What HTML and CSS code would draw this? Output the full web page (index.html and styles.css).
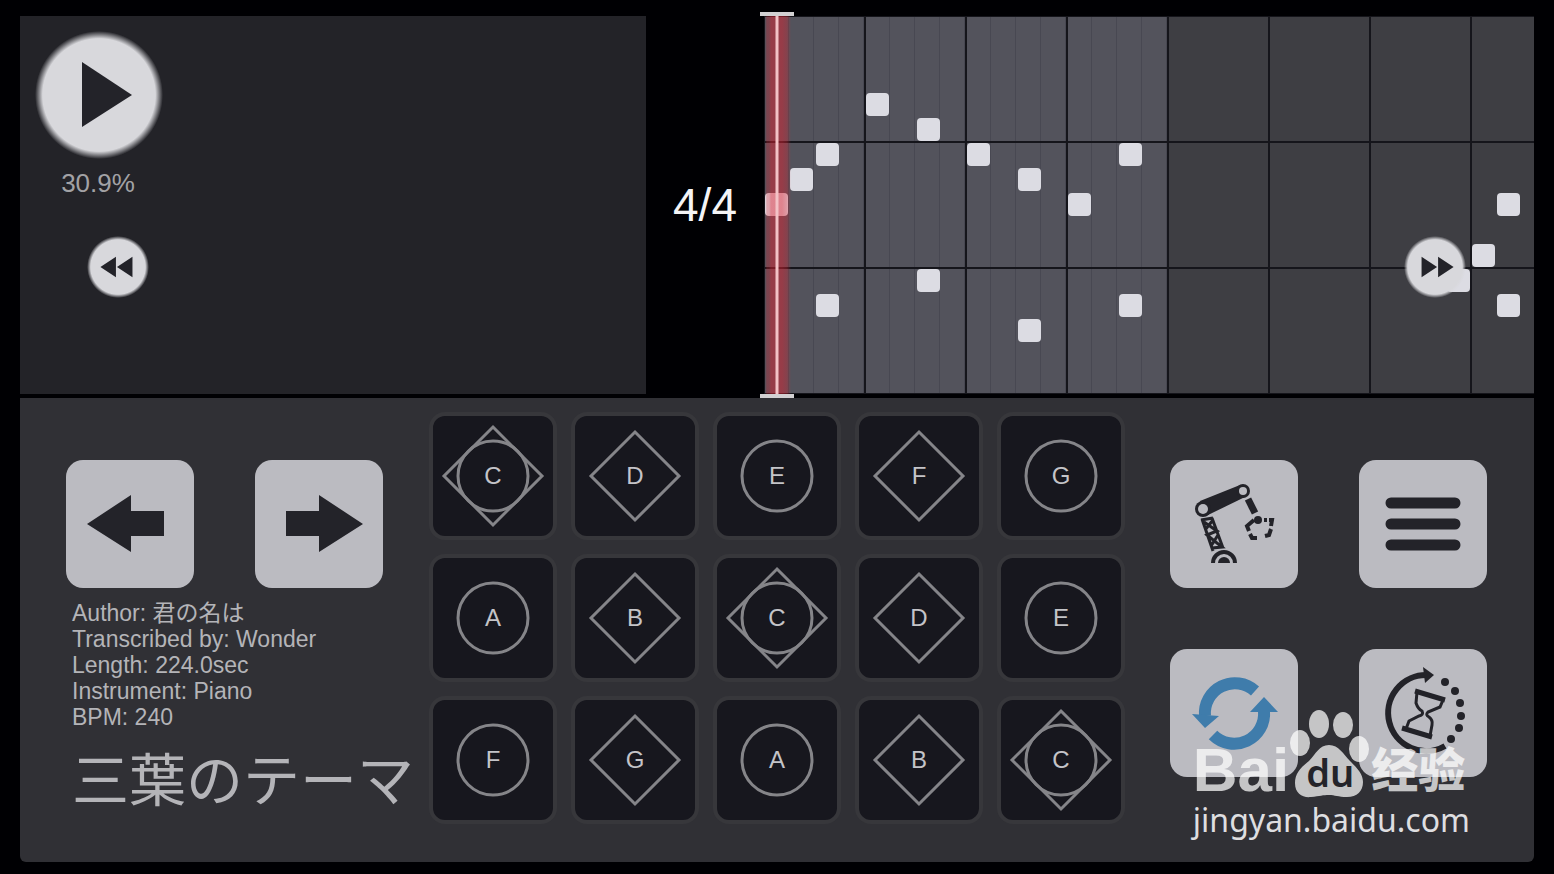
FILE: index.html
```html
<!DOCTYPE html>
<html lang="en">
<head>
<meta charset="UTF-8" />
<meta name="viewport" content="width=device-width, initial-scale=1" />
<title>三葉のテーマ - Player</title>
<link rel="stylesheet" href="styles.css">
</head>
<body>

<svg class="defs" aria-hidden="true">
  <symbol id="shape-circle" viewBox="0 0 120 120">
    <circle cx="60" cy="60" r="35" />
  </symbol>
  <symbol id="shape-diamond" viewBox="0 0 120 120">
    <path d="M60 16 104 60 60 104 16 60Z" />
  </symbol>
  <symbol id="shape-both" viewBox="0 0 120 120">
    <path d="M60 11 109 60 60 109 11 60Z" />
    <circle cx="60" cy="60" r="35" />
  </symbol>
</svg>

<main>
  <section class="stage">
    <div class="transport">
      <button class="round-btn play-btn" aria-label="Play">
        <svg viewBox="0 0 128 128"><path d="M47 31 97 64 47 96Z" /></svg>
      </button>
      <div class="progress">30.9%</div>
      <button class="round-btn skip-btn" aria-label="Rewind">
        <svg viewBox="0 0 60 60"><path d="M13 30 28 20V40ZM29 30 44 20V40Z" /></svg>
      </button>
    </div>

    <div class="signature">4/4</div>

    <div class="roll">
      <div class="lanes"><div class="notes" id="notes"></div></div>
      <button class="round-btn skip-btn forward-btn" aria-label="Fast forward">
        <svg viewBox="0 0 60 60"><path d="M17 20 32 30 17 40ZM33 20 48 30 33 40Z" /></svg>
      </button>
      <div class="playhead"></div>
    </div>
  </section>

  <section class="deck">
    <div class="song">
      <div class="tiles">
        <button class="tile" aria-label="Previous">
          <svg viewBox="0 0 128 128"><path d="M21 64 65 35V51H98V76H65V92Z" /></svg>
        </button>
        <button class="tile" aria-label="Next">
          <svg viewBox="0 0 128 128"><path d="M108 64 64 35V51H31V76H64V92Z" /></svg>
        </button>
      </div>
      <ul class="info">
        <li>Author: 君の名は</li>
        <li>Transcribed by: Wonder</li>
        <li>Length: 224.0sec</li>
        <li>Instrument: Piano</li>
        <li>BPM: 240</li>
      </ul>
      <h1>三葉のテーマ</h1>
    </div>

    <div class="keys" id="keys"></div>

    <div class="tiles tools">
      <button class="tile" aria-label="Auto play">
        <svg viewBox="0 0 128 128">
          <path d="M30 41 70 25 75 37 36 56Z" />
          <circle cx="33" cy="49" r="8" /><circle cx="73" cy="31" r="7" />
          <circle class="hole" cx="33" cy="49" r="5" /><circle class="hole" cx="73" cy="31" r="4" />
          <path class="line" stroke-width="7" d="M78 39 85 53" />
          <circle cx="88" cy="60" r="4" />
          <path class="line" stroke-width="4" d="M84 60 77 66 79 71M80 74 82 78 87 78M94 60H97M99 60H102L101 66M101 69 99 75 95 76" />
          <path class="line" stroke-width="3" d="M32 59 43 91M42 58 53 88M31 60 43 58M34 62 47 71 37 75 52 87 42 88M43 60 35 70M48 75 41 86" />
          <path class="line" stroke-width="4" d="M43 103A11 11 0 0 1 65 103" />
          <path d="M48 103A6 6 0 0 1 60 103Z" />
        </svg>
      </button>
      <button class="tile" aria-label="Menu">
        <svg viewBox="0 0 128 128">
          <path class="line" stroke-width="11" stroke-linecap="round" d="M32 43H96M32 64H96M32 85H96" />
        </svg>
      </button>
      <button class="tile" aria-label="Restart">
        <svg viewBox="0 0 128 128" class="blue">
          <path class="line" stroke-width="12" d="M85 42A30 30 0 0 0 35 67M43 86A30 30 0 0 0 94 62" />
          <path d="M22 65 49 67 35 79ZM80 63 94 48 108 63Z" />
        </svg>
      </button>
      <button class="tile" aria-label="Speed">
        <svg viewBox="0 0 128 128">
          <path class="line" stroke-width="6" d="M68 26A38 38 0 1 0 86 97" />
          <path d="M64 18 75 26 66 34Z" />
          <circle cx="86" cy="33" r="4" /><circle cx="96" cy="42" r="4" />
          <circle cx="101" cy="54" r="4" /><circle cx="102" cy="67" r="4" />
          <circle cx="100" cy="79" r="4" /><circle cx="92" cy="90" r="4" />
          <path class="line" stroke-width="5" d="M56 42 86 51M43 79 73 88" />
          <path class="line" stroke-width="3" d="M58 43 57 54Q59 60 63 62Q65 66 60 67L50 72 47 80M84 51 81 58 69 63Q66 66 70 68Q74 71 73 76L71 87" />
        </svg>
      </button>
    </div>

    <div class="watermark">
      <div class="logo">
        <span class="logo-bai">Bai</span>
        <span class="paw">
          <svg viewBox="0 0 82 88" aria-hidden="true">
            <ellipse cx="11" cy="33" rx="10" ry="13" />
            <ellipse cx="30" cy="14" rx="10" ry="14" />
            <ellipse cx="54" cy="15" rx="10" ry="13" />
            <ellipse cx="70" cy="39" rx="10" ry="13" />
            <path d="M40 35C30 35 27 44 20 51C11 58 6 64 6 73C6 84 14 88 22 87C31 86 34 85 40 85C46 85 49 87 58 87C68 87 74 81 74 72C74 64 68 58 61 51C54 44 50 35 40 35Z" />
          </svg>
          <span class="logo-du">du</span>
        </span>
        <span class="logo-jy" lang="zh">经验</span>
      </div>
      <div class="site">jingyan.baidu.com</div>
    </div>
  </section>
</main>

<script>
  // [sixteenth, pitch], counted from the top left cell
  const notes = [
    [1, 8], [2, 7], [3, 6], [3, 12], [5, 4], [7, 5], [7, 11], [9, 6], [11, 7],
    [11, 13], [13, 8], [15, 6], [15, 12], [28, 11], [29, 10], [30, 8], [30, 12]
  ];
  const names = 'CDEFGABCDEFGABC';

  const notesEl = document.getElementById('notes');
  notes.forEach(([col, row]) => {
    const note = document.createElement('span');
    note.className = 'note';
    note.style.gridColumn = col;
    note.style.gridRow = row;
    notesEl.appendChild(note);
  });

  const keysEl = document.getElementById('keys');
  [...names].forEach((name, i) => {
    // every octave C has both shapes, the rest alternate by column
    const shape = i % 7 === 0 ? 'both' : (i % 5) % 2 ? 'diamond' : 'circle';
    const key = document.createElement('button');
    key.className = 'key';
    key.innerHTML = `<svg aria-hidden="true"><use href="#shape-${shape}"></use></svg><span>${name}</span>`;
    keysEl.appendChild(key);
  });
</script>

</body>
</html>
```

FILE: styles.css
```css
* {
  box-sizing: border-box;
}
body {
  margin: 0;
  padding: 16px 20px 12px;
  background: #000003;
  color: #b4b4b8;
  font-family: "Liberation Sans", "Noto Sans CJK JP", sans-serif;
}
button {
  padding: 0;
  border: none;
  font: inherit;
  color: inherit;
  cursor: pointer;
}
svg {
  display: block;
  fill: #232329;
}
.defs {
  position: absolute;
  width: 0;
  height: 0;
}
main {
  display: flex;
  flex-direction: column;
  gap: 4px;
}

/* top half: transport and piano roll */
.stage {
  display: grid;
  grid-template-columns: 313fr 59fr 385fr;
}
.transport {
  padding: 15px;
  background: #232328;
}
.round-btn {
  display: block;
  border-radius: 50%;
  background: radial-gradient(closest-side, #d8d8dc 88%, rgba(216, 216, 220, 0));
}
.play-btn {
  width: 128px;
  height: 128px;
}
.progress {
  width: 126px;
  margin: 8px 0 37px;
  font-size: 26px;
  line-height: 32px;
  text-align: center;
  color: #a2a2a5;
}
.skip-btn {
  width: 62px;
  height: 62px;
  margin-left: 52px;
}
.signature {
  display: flex;
  align-items: center;
  justify-content: center;
  font-size: 46px;
  color: #f4f4f6;
}
.roll {
  position: relative;
  min-width: 0;
  height: 378px;
}
.lanes {
  height: 100%;
  overflow: hidden;
  background:
    repeating-linear-gradient(to bottom, #15151b 0 1px, transparent 1px 125px, #15151b 125px 126px),
    repeating-linear-gradient(to right, #15151b 0 1px, transparent 1px 100px, #15151b 100px 101px),
    linear-gradient(to right, transparent 403px, #3e3e43 403px),
    repeating-linear-gradient(to right, transparent 0 24px, rgba(30, 30, 40, 0.2) 24px 25px) 0 0 / 101px 100%,
    #53535c;
}
.notes {
  display: grid;
  grid-template-columns: repeat(32, 1fr);
  grid-template-rows: repeat(15, 1fr);
  width: 808px;
  height: 378px;
  place-items: center;
}
.note {
  width: 23px;
  height: 23px;
  border-radius: 4px;
  background: #dcdce3;
}
.forward-btn {
  position: absolute;
  top: 220px;
  right: 68px;
}
.playhead {
  position: absolute;
  top: -4px;
  bottom: -4px;
  left: -4px;
  width: 34px;
  border-top: 4px solid #d2d0d2;
  border-bottom: 4px solid #d2d0d2;
  background: linear-gradient(to right, transparent 5px, rgba(225, 35, 50, 0.3) 7px 9px, rgba(225, 35, 50, 0.48) 11px 15px, #f4c2c6 16px 18px, rgba(225, 35, 50, 0.48) 19px 22px, rgba(225, 35, 50, 0.35) 27px, transparent 31px);
}

/* bottom half: song info, keyboard, tools */
.deck {
  position: relative;
  display: grid;
  grid-template-columns: 1fr auto 1fr;
  padding: 14px 0 38px;
  border-radius: 0 0 6px 6px;
  background: #303035;
}
.song {
  padding: 48px 0 0 46px;
}
.tiles {
  display: grid;
  grid-template-columns: 128px 128px;
  gap: 61px;
}
.tools {
  padding: 48px 47px 0 0;
  justify-content: end;
  align-content: start;
}
.tile {
  width: 128px;
  height: 128px;
  border-radius: 17px;
  background: #bbbbc1;
}
.tile .line {
  fill: none;
  stroke: #232329;
}
.tile .hole {
  fill: #bbbbc1;
}
.tile .blue {
  fill: #3f7cab;
}
.tile .blue .line {
  stroke: #3f7cab;
}
.info {
  margin: 12px 0 14px 6px;
  padding: 0;
  list-style: none;
  font-size: 23px;
  line-height: 26px;
  white-space: nowrap;
}
h1 {
  margin: 0 0 0 6px;
  font-family: "Noto Sans CJK JP", sans-serif;
  font-size: 57px;
  font-weight: 400;
  line-height: 64px;
  white-space: nowrap;
}
.keys {
  display: grid;
  grid-template-columns: repeat(5, 128px);
  grid-auto-rows: 128px;
  gap: 14px;
}
.key {
  display: grid;
  place-items: center;
  border: 4px solid #37373b;
  border-radius: 16px;
  background: #17171e;
  font-size: 24px;
  color: #c4c4c8;
}
.key svg,
.key span {
  grid-area: 1 / 1;
}
.key svg {
  width: 120px;
  height: 120px;
  fill: none;
  stroke: #858589;
  stroke-width: 3px;
}

/* overlay in the corner */
.watermark {
  position: absolute;
  right: 64px;
  bottom: 20px;
  color: #ffffff;
  pointer-events: none;
}
.logo {
  display: flex;
  align-items: flex-end;
  opacity: 0.72;
}
.logo-bai {
  font-size: 62px;
  font-weight: 700;
  line-height: 56px;
}
.paw {
  position: relative;
  width: 82px;
}
.paw svg {
  fill: #ffffff;
}
.logo-du {
  position: absolute;
  bottom: 0;
  left: 0;
  width: 100%;
  font-family: "Noto Sans", sans-serif;
  font-size: 38px;
  font-weight: 600;
  line-height: 52px;
  text-align: center;
  color: #202026;
}
.logo-jy {
  font-family: "Noto Sans CJK SC", sans-serif;
  font-size: 47px;
  font-weight: 900;
  line-height: 62px;
}
.site {
  font-family: "Noto Sans", sans-serif;
  font-size: 32px;
  line-height: 44px;
  text-align: right;
  color: #dedee0;
}

@media (max-width: 1300px) {
  .deck {
    grid-template-columns: 1fr;
    gap: 24px;
    justify-items: center;
  }
  .song,
  .tools {
    padding: 0;
  }
}
```
